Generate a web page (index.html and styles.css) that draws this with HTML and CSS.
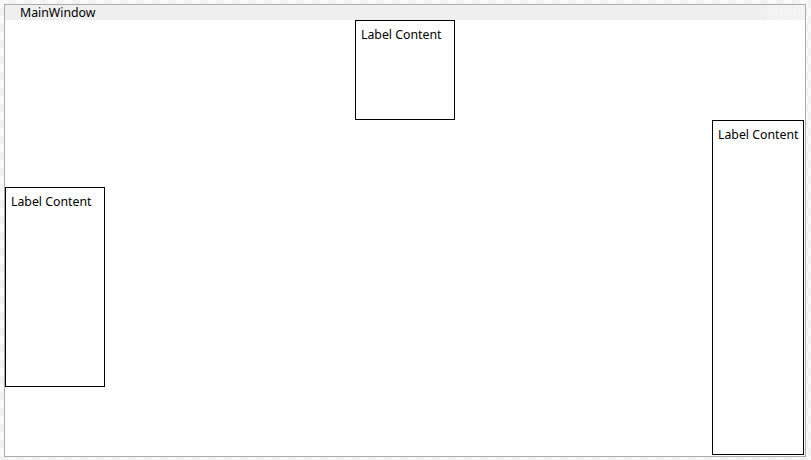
FILE: index.html
```html
<!DOCTYPE html>
<html lang="en">
<head>
    <meta charset="UTF-8">
    <title>MainWindow</title>
    <link rel="stylesheet" href="styles.css">
</head>
<body>
    <div class="window">
        <div class="title-bar">
            <span class="title">MainWindow</span>
            <div class="caption-buttons">
                <span class="caption-btn"></span>
                <span class="caption-btn"></span>
                <span class="caption-btn"></span>
            </div>
        </div>
        <div class="content">
            <div class="label label-top">Label Content</div>
            <div class="label label-left">Label Content</div>
            <div class="label label-right">Label Content</div>
        </div>
    </div>
</body>
</html>
```

FILE: styles.css
```css
* {
    margin: 0;
    padding: 0;
    box-sizing: border-box;
}

body {
    width: 811px;
    height: 460px;
    padding: 4px 0 0 4px;
    font-family: "Noto Sans", "Liberation Sans", sans-serif;
    font-size: 12.3px;
    color: #000;
    background-color: #f8f8f8;
    background-image: conic-gradient(#f2f2f2 25%, #fafafa 0 50%, #f2f2f2 0 75%, #fafafa 0);
    background-size: 16px 16px;
    overflow: hidden;
}

.window {
    width: 802px;
    height: 453px;
    border: 1px solid #ababab;
    background: #fff;
    display: flex;
    flex-direction: column;
}

.title-bar {
    height: 15px;
    background: #efefef;
    display: flex;
    align-items: center;
    justify-content: space-between;
}

.title {
    padding-left: 15px;
    line-height: 15px;
}

.caption-buttons {
    display: flex;
    gap: 1px;
    height: 15px;
}

    .caption-btn {
        width: 12px;
        height: 15px;
        background: #f3f3f3;
    }

.content {
    flex: 1;
    display: grid;
    grid-template: 1fr / 1fr;
}

.label {
    grid-area: 1 / 1;
    border: 1px solid #000;
    padding: 5px 5px;
    line-height: 18px;
    white-space: nowrap;
}

.label-top {
    justify-self: center;
    align-self: start;
    width: 100px;
    height: 100px;
}

.label-left {
    justify-self: start;
    align-self: start;
    width: 100px;
    height: 200px;
    margin-top: 167px;
}

.label-right {
    justify-self: end;
    align-self: end;
    width: 92px;
    height: 335px;
    margin: 0 1px 1px 0;
}
```
